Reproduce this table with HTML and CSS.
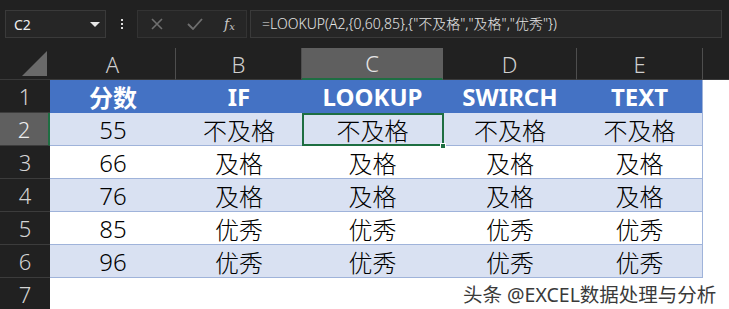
FILE: index.html
```html
<!DOCTYPE html>
<html lang="zh">
<head>
<meta charset="utf-8">
<link rel="stylesheet" href="styles.css">
</head>
<body>
<div class="app">
  <div class="topbar">
    <div class="namebox"><span class="ref">C2</span><span class="caret"></span></div>
    <div class="dots"><i></i><i></i><i></i></div>
    <div class="btns">
      <svg class="ic" width="12" height="12" viewBox="0 0 12 12"><path d="M1 1L11 11M11 1L1 11" stroke="#6f6f6f" stroke-width="1.6" fill="none"/></svg>
      <svg class="ic" width="16" height="12" viewBox="0 0 16 12"><path d="M1 6L6 11L15 1" stroke="#6f6f6f" stroke-width="1.8" fill="none"/></svg>
      <span class="fx">f<sub>x</sub></span>
    </div>
    <div class="formula">=LOOKUP(A2,{0,60,85},{"不及格","及格","优秀"})</div>
  </div>
  <div class="sheet">
    <div class="corner"><span class="tri"></span></div>
    <div class="ch">A</div><div class="ch">B</div><div class="ch sel">C</div><div class="ch">D</div><div class="ch">E</div><div class="ch last"></div>

    <div class="rh">1</div>
    <div class="c hd">分数</div><div class="c hd">IF</div><div class="c hd">LOOKUP</div><div class="c hd">SWIRCH</div><div class="c hd edge">TEXT</div><div class="c out"></div>

    <div class="rh sel">2</div>
    <div class="c bd">55</div><div class="c bd">不及格</div><div class="c bd active">不及格<span class="handle"></span></div><div class="c bd">不及格</div><div class="c bd edge">不及格</div><div class="c out"></div>

    <div class="rh">3</div>
    <div class="c wt">66</div><div class="c wt">及格</div><div class="c wt">及格</div><div class="c wt">及格</div><div class="c wt edge">及格</div><div class="c out"></div>

    <div class="rh">4</div>
    <div class="c bd">76</div><div class="c bd">及格</div><div class="c bd">及格</div><div class="c bd">及格</div><div class="c bd edge">及格</div><div class="c out"></div>

    <div class="rh">5</div>
    <div class="c wt">85</div><div class="c wt">优秀</div><div class="c wt">优秀</div><div class="c wt">优秀</div><div class="c wt edge">优秀</div><div class="c out"></div>

    <div class="rh">6</div>
    <div class="c bd">96</div><div class="c bd">优秀</div><div class="c bd">优秀</div><div class="c bd">优秀</div><div class="c bd edge">优秀</div><div class="c out"></div>

    <div class="rh">7</div>
    <div class="c out"></div><div class="c out"></div><div class="c out"></div><div class="c out"></div><div class="c out"></div><div class="c out"></div>
  </div>
  <div class="watermark">头条 @EXCEL数据处理与分析</div>
</div>
</body>
</html>
```

FILE: styles.css
```css
* { box-sizing: border-box; }
html, body { margin: 0; padding: 0; }
body {
  background: #212121;
  font-family: "Noto Sans", "Noto Sans CJK SC", sans-serif;
  width: 729px;
  height: 309px;
  overflow: hidden;
}
.app { position: relative; width: 729px; height: 309px; overflow: hidden; }

.topbar {
  height: 48px;
  display: flex;
  align-items: flex-start;
  padding-top: 10px;
  padding-left: 5px;
}
.namebox {
  width: 101px;
  height: 28px;
  background: #262626;
  border: 1px solid #3a3a3a;
  display: flex;
  align-items: center;
  justify-content: space-between;
  padding: 0 5px 0 8px;
  color: #f0f0f0;
  font-size: 14px;
}
.caret {
  width: 0; height: 0;
  border-left: 5px solid transparent;
  border-right: 5px solid transparent;
  border-top: 5px solid #e8e8e8;
}
.dots {
  width: 31px;
  height: 28px;
  display: flex;
  flex-direction: column;
  align-items: center;
  justify-content: center;
  gap: 2px;
}
.dots i { display: block; width: 2px; height: 2px; background: #dcdcdc; }
.btns {
  width: 110px;
  height: 28px;
  background: #262626;
  border: 1px solid #333;
  display: flex;
  align-items: center;
  padding-left: 13px;
}
.btns .ic:first-child { margin-right: 24px; }
.btns .ic:nth-child(2) { margin-right: 21px; }
.fx {
  font-family: "DejaVu Serif", "Liberation Serif", serif;
  font-style: italic;
  color: #c8c8c8;
  font-size: 14px;
  line-height: 1;
}
.fx sub { font-size: 10px; vertical-align: -1px; }
.formula {
  margin-left: 3px;
  width: 472px;
  height: 28px;
  background: #262626;
  border: 1px solid #3a3a3a;
  color: #e6e6e6;
  font-size: 14px;
  font-weight: 300;
  line-height: 26px;
  padding-left: 11px;
  white-space: nowrap;
}

.sheet {
  display: grid;
  grid-template-columns: 50px 126px 126px 141px 134px 126px 26px;
  grid-template-rows: 32px repeat(7, 33px);
}
.corner { background: #212121; position: relative; border-bottom: 1px solid #3a3a3a; }
.tri {
  position: absolute;
  right: 3px; bottom: 3px;
  width: 0; height: 0;
  border-left: 25px solid transparent;
  border-bottom: 25px solid #6a6a6a;
}
.ch {
  background: #212121;
  color: #cfcfcf;
  font-size: 22px;
  display: flex;
  align-items: center;
  justify-content: center;
  border-right: 1px solid #4e4e4e;
  border-bottom: 1px solid #3a3a3a;
  font-weight: 300;
}
.ch.sel { background: #5f5f5f; border-bottom: 2px solid #1e6e42; border-right-color: #5f5f5f; color: #e6e6e6; }
.ch.last { border-right: none; }
.rh {
  background: #212121;
  color: #d4d4d4;
  font-size: 22px;
  font-weight: 300;
  display: flex;
  align-items: center;
  justify-content: center;
  border-bottom: 1px solid #3c3c3c;
}
.rh.sel { background: #5f5f5f; border-right: 2px solid #1e6e42; color: #eee; }

.c {
  display: flex;
  align-items: center;
  justify-content: center;
  font-size: 24px;
  font-weight: 300;
  color: #000;
  white-space: nowrap;
}
.hd { background: #4472c4; color: #fff; font-weight: 700; }
.bd { background: #d9e1f2; border-bottom: 1px solid #9fb3da; }
.wt { background: #fff; border-bottom: 1px solid #9fb3da; }
.edge { border-right: 1px solid #9fb3da; }
.out { background: #fff; }
.active { position: relative; }
.active::before {
  content: "";
  position: absolute;
  left: 0; top: 0; right: -1px; bottom: -1px;
  border: 2px solid #1e6e42;
}
.handle {
  position: absolute;
  right: -3px; bottom: -4px;
  width: 6px; height: 6px;
  background: #1e6e42;
  border: 1px solid #fff;
}
.watermark {
  position: absolute;
  left: 463px;
  top: 279px;
  font-size: 19.5px;
  color: #3a3a3a;
  white-space: nowrap;
  text-shadow: 0 0 2px #fff, 0 0 2px #fff;
}
```
